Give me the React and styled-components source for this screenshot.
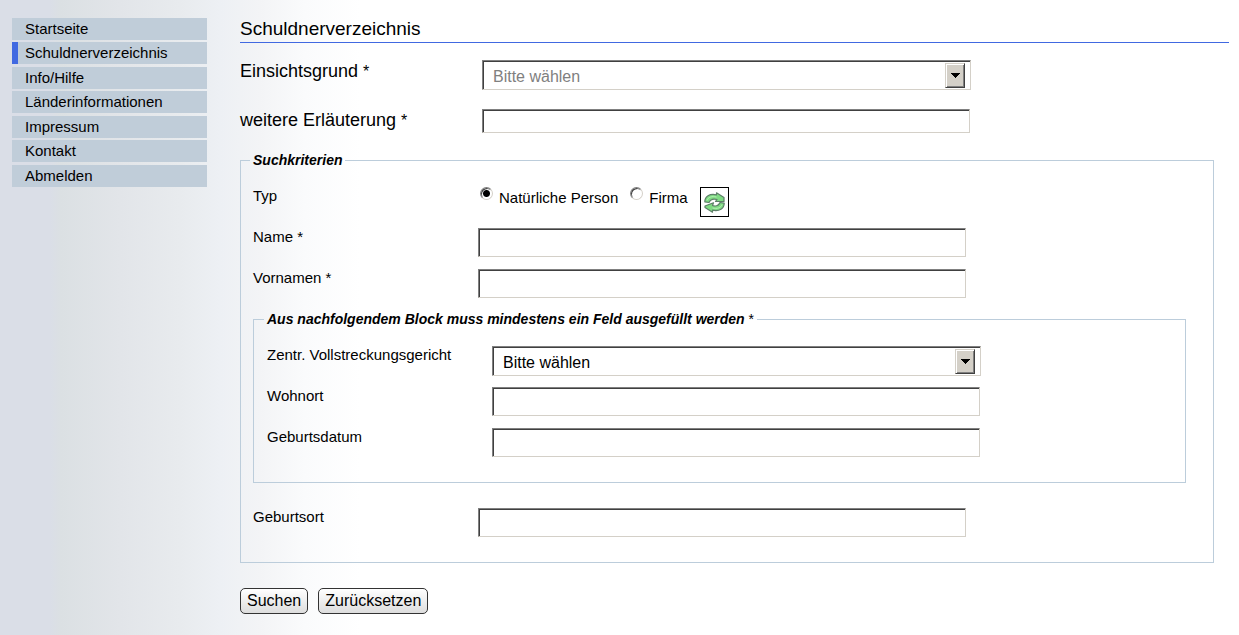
import styled, { createGlobalStyle } from "styled-components";
import { useState } from "react";

const navItems = [
  "Startseite",
  "Schuldnerverzeichnis",
  "Info/Hilfe",
  "Länderinformationen",
  "Impressum",
  "Kontakt",
  "Abmelden",
];

const SelectField = ({ id, muted }) => (
  <SelectWrap>
    <Select id={id} $muted={muted}>
      <option>Bitte wählen</option>
    </Select>
    <Arrow aria-hidden="true">
      <svg width="9" height="5" viewBox="0 0 9 5" shapeRendering="crispEdges">
        <path d="M0 0h9v1h-1v1h-1v1h-1v1h-1v1h-1v-1h-1v-1h-1v-1h-1v-1h-1z" fill="#000" />
      </svg>
    </Arrow>
  </SelectWrap>
);

const RefreshIcon = () => (
  <svg width="21" height="21" viewBox="0 0 21 21" aria-hidden="true">
    <g fill="#7fdb83" stroke="#5d7f68" strokeWidth="1.2" strokeLinejoin="round">
      <path d="M.8 9.800C.8 4.500 5.500 1.300 12.500 2.800L12.500 .8L20 5.500L20 9.500L11.500 9.500L13 7.500C9 6.300 6.500 7.200 5 10.500Z" />
      <path d="M20.200 11.200C20.200 16.500 15.500 19.700 8.500 18.200L8.500 20.200L1 15.500L1 14L9.500 10.800L8.500 13.500C12 14.700 14.500 13.800 16 10.500Z" />
    </g>
    <path
      d="M3 8.500C4 5 8 4 12.500 5M18 12.500C17 16 13 17 8.500 16"
      fill="none"
      stroke="#b4f2b2"
      strokeWidth="1"
    />
  </svg>
);

const App = () => {
  const [typ, setTyp] = useState("person");

  return (
    <>
      <GlobalStyle />
      <Page>
        <Nav aria-label="Navigation">
          <NavList>
            {navItems.map((item) => (
              <NavItem key={item}>
                <NavLink href="#" $active={item === "Schuldnerverzeichnis"}>
                  {item}
                </NavLink>
              </NavItem>
            ))}
          </NavList>
        </Nav>

        <Main>
          <Title>Schuldnerverzeichnis</Title>

          <form onSubmit={(e) => e.preventDefault()}>
            <TopFields>
              <TopRow>
                <TopLabel htmlFor="grund">Einsichtsgrund <Star>*</Star></TopLabel>
                <SelectField id="grund" muted />
              </TopRow>
              <TopRow>
                <TopLabel htmlFor="erlaeuterung">weitere Erläuterung <Star>*</Star></TopLabel>
                <Input id="erlaeuterung" type="text" $small />
              </TopRow>
            </TopFields>

            <Fieldset>
              <Legend>Suchkriterien</Legend>
              <Rows>
                <Row>
                  <Label as="span" id="typ">Typ</Label>
                  <RadioGroup role="radiogroup" aria-labelledby="typ">
                    <RadioLabel>
                      <Radio
                        type="radio"
                        name="typ"
                        checked={typ === "person"}
                        onChange={() => setTyp("person")}
                      />
                      <span>Natürliche Person</span>
                    </RadioLabel>
                    <RadioLabel>
                      <Radio
                        type="radio"
                        name="typ"
                        checked={typ === "firma"}
                        onChange={() => setTyp("firma")}
                      />
                      <span>Firma</span>
                    </RadioLabel>
                    <IconButton type="button" aria-label="Aktualisieren">
                      <RefreshIcon />
                    </IconButton>
                  </RadioGroup>
                </Row>
                <Row>
                  <Label htmlFor="name">Name *</Label>
                  <Input id="name" type="text" />
                </Row>
                <Row>
                  <Label htmlFor="vornamen">Vornamen *</Label>
                  <Input id="vornamen" type="text" />
                </Row>
              </Rows>

              <InnerFieldset>
                <Legend>
                  Aus nachfolgendem Block muss mindestens ein Feld ausgefüllt werden <LegendStar>*</LegendStar>
                </Legend>
                <Rows>
                  <Row>
                    <Label htmlFor="gericht">Zentr. Vollstreckungsgericht</Label>
                    <SelectField id="gericht" />
                  </Row>
                  <Row>
                    <Label htmlFor="wohnort">Wohnort</Label>
                    <Input id="wohnort" type="text" />
                  </Row>
                  <Row>
                    <Label htmlFor="geburtsdatum">Geburtsdatum</Label>
                    <Input id="geburtsdatum" type="text" />
                  </Row>
                </Rows>
              </InnerFieldset>

              <Row>
                <Label htmlFor="geburtsort">Geburtsort</Label>
                <Input id="geburtsort" type="text" />
              </Row>
            </Fieldset>

            <Buttons>
              <Button type="submit">Suchen</Button>
              <Button type="reset">Zurücksetzen</Button>
            </Buttons>
          </form>
        </Main>
      </Page>
    </>
  );
};
export default App;

const GlobalStyle = createGlobalStyle`
  * {
    box-sizing: border-box;
  }

  body {
    margin: 0;
    min-height: 100vh;
    color: #000;
    font-family: "Liberation Sans", Arial, sans-serif;
    font-size: 15px;
    line-height: 18px;
    background: linear-gradient(
      to right,
      #dadee7 0,
      #dadee7 50px,
      #dbe0e3 60px,
      #e2e5e9 120px,
      #e8ebee 180px,
      #edf0f4 220px,
      #f3f4f6 260px,
      #fafbfc 305px,
      #fff 360px
    ) #fff;
  }
`;

const Page = styled.div`
  display: flex;
  align-items: flex-start;
  gap: 33px;
  padding: 18px 10px 20px 12px;
`;

const Nav = styled.nav`
  flex: 0 0 195px;
`;

const NavList = styled.ul`
  list-style: none;
  margin: 0;
  padding: 0;
`;

const NavItem = styled.li`
  margin-bottom: 2px;

  &:nth-child(even) {
    margin-bottom: 3px;
  }
`;

const NavLink = styled.a`
  display: block;
  padding-left: 7px;
  border-left: 6px solid ${(p) => (p.$active ? "#4169e1" : "#c0cdd9")};
  background: #c0cdd9;
  color: #000;
  line-height: 22px;
  text-decoration: none;

  &:hover {
    border-left-color: #4169e1;
  }
`;

const Main = styled.main`
  flex: 1;
  min-width: 0;
`;

const Title = styled.h1`
  margin: 0 0 17px;
  padding-bottom: 2px;
  border-bottom: 1px solid #4169e1;
  font-size: 19px;
  font-weight: 400;
  line-height: 22px;
`;

const TopFields = styled.div`
  display: grid;
  gap: 19px;
  margin-bottom: 18px;
`;

const TopRow = styled.div`
  display: flex;
  align-items: flex-start;
`;

const TopLabel = styled.label`
  flex: 0 0 242px;
  font-size: 18px;
  line-height: 22px;
`;

const Star = styled.span`
  font-size: 16px;
`;

const Fieldset = styled.fieldset`
  min-width: 0;
  margin: 0 15px 25px 0;
  padding: 18px 12px 25px;
  border: 1px solid #bccddb;
`;

const InnerFieldset = styled(Fieldset)`
  margin-top: 12px;
  padding: 18px 13px 25px;
`;

const Legend = styled.legend`
  margin-left: -3px;
  padding: 0 3px;
  font-size: 14px;
  font-style: italic;
  font-weight: 700;
`;

const LegendStar = styled.span`
  font-style: normal;
  font-weight: 400;
`;

const Rows = styled.div`
  display: grid;
  grid-auto-rows: 29px;
  gap: 12px;
`;

const Row = styled.div`
  display: flex;
  align-items: flex-start;
`;

const Label = styled.label`
  flex: 0 0 225px;
`;

const Input = styled.input`
  flex: 0 1 488px;
  min-width: 0;
  height: ${(p) => (p.$small ? "24px" : "29px")};
  padding: 0 9px;
  border: 1px solid;
  border-color: #808080 #d4d0c8 #d4d0c8 #808080;
  border-radius: 0;
  box-shadow: inset 1px 1px #404040;
  background: #fff;
  font: inherit;
  font-size: 16px;
`;

const SelectWrap = styled.div`
  position: relative;
  flex: 0 1 489px;
  min-width: 0;
`;

const Select = styled.select`
  appearance: none;
  display: block;
  width: 100%;
  height: 30px;
  padding: 4px 30px 0 10px;
  border: 1px solid;
  border-color: #808080 #d4d0c8 #d4d0c8 #808080;
  border-radius: 0;
  box-shadow: inset 1px 1px #404040;
  background: #fff;
  color: ${(p) => (p.$muted ? "#808080" : "#000")};
  font: inherit;
  font-size: 16px;
`;

const Arrow = styled.span`
  position: absolute;
  top: 3px;
  right: 6px;
  display: flex;
  align-items: center;
  justify-content: center;
  width: 20px;
  height: 25px;
  border: 1px solid;
  border-color: #d4d0c8 #404040 #404040 #d4d0c8;
  box-shadow: inset 1px 1px #fff, inset -1px -1px #808080;
  background: #d4d0c8;
  pointer-events: none;
`;

const RadioGroup = styled.div`
  display: flex;
  align-items: flex-start;
  gap: 12px;
`;

const RadioLabel = styled.label`
  display: flex;
  align-items: flex-start;
  gap: 6px;
  padding-left: 2px;

  span {
    padding-top: 2px;
  }

  & + & {
    padding-left: 0;
  }
`;

const Radio = styled.input`
  appearance: none;
  width: 13px;
  height: 13px;
  margin: 0;
  border: 1px solid;
  border-color: #808080 #d4d0c8 #d4d0c8 #808080;
  border-radius: 50%;
  box-shadow: inset 1px 1px #404040;
  background: #fff;

  &:checked {
    background: radial-gradient(circle, #000 3px, #fff 4px);
  }
`;

const IconButton = styled.button`
  display: flex;
  align-items: center;
  justify-content: center;
  width: 29px;
  height: 30px;
  padding: 0;
  border: 1px solid #000;
  background: #fff;
`;

const Buttons = styled.div`
  display: flex;
  gap: 10px;
`;

const Button = styled.button`
  height: 26px;
  padding: 0 6px;
  border: 1px solid #333;
  border-radius: 5px;
  background: linear-gradient(#fff, #ddd);
  color: #000;
  font: inherit;
  font-size: 16px;
`;
